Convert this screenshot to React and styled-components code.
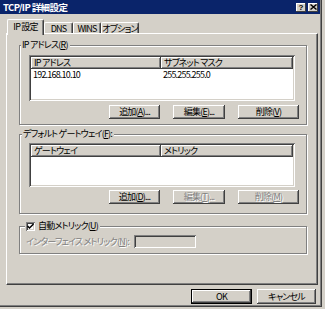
import styled, { createGlobalStyle } from 'styled-components';

const GlobalStyle = createGlobalStyle`
  html, body {
    margin: 0;
    padding: 0;
    background: #d4d0c8;
  }
  body {
    font-family: 'Noto Sans CJK JP', sans-serif;
    font-size: 9px;
    font-feature-settings: 'palt';
    letter-spacing: -0.8px;
    color: #000;
  }
`;

const Window = styled.div`
  width: 322px;
  height: 307px;
  box-sizing: border-box;
  background: #d4d0c8;
  border-right: 1px solid #404040;
  border-bottom: 1px solid #404040;
  box-shadow: inset -1px -1px 0 #808080;
  display: flex;
  flex-direction: column;
`;

const TitleBar = styled.div`
  height: 14px;
  background: #0a246a;
  display: flex;
  align-items: center;
  padding: 0 2px 0 3px;
  margin-right: 1px;
`;

const Title = styled.div`
  flex: 1;
  color: #fff;
  font-weight: bold;
  font-size: 9.5px;
  letter-spacing: -0.6px;
  line-height: 14px;
  white-space: nowrap;
`;

const CaptionButton = styled.div`
  width: 10px;
  height: 9px;
  margin-left: ${(p) => (p.$gap ? 2 : 0)}px;
  background: #d4d0c8;
  box-shadow: inset -1px -1px 0 #404040, inset 1px 1px 0 #fff;
  display: flex;
  align-items: center;
  justify-content: center;
  font-family: 'Liberation Sans', sans-serif;
  font-weight: bold;
  font-size: 8px;
  letter-spacing: 0;
  line-height: 9px;
`;

const TabStrip = styled.div`
  display: flex;
  align-items: flex-end;
  height: 14px;
  margin-top: 5px;
  padding-left: 7px;
  position: relative;
  z-index: 1;
`;

const Tab = styled.div`
  width: ${(p) => p.$w}px;
  height: ${(p) => (p.$active ? 16 : 11)}px;
  margin-bottom: ${(p) => (p.$active ? -2 : 0)}px;
  box-sizing: border-box;
  background: #d4d0c8;
  border-top: 1px solid #fff;
  border-left: 1px solid #fff;
  border-right: 1px solid #404040;
  border-top-left-radius: 2px;
  border-top-right-radius: 2px;
  box-shadow: inset -1px 0 0 #808080;
  display: flex;
  align-items: ${(p) => (p.$active ? 'flex-start' : 'center')};
  padding-top: ${(p) => (p.$active ? 1 : 0)}px;
  justify-content: center;
  line-height: 11px;
  white-space: nowrap;
  overflow: hidden;
`;

const Panel = styled.div`
  margin-left: 6px;
  width: 312px;
  height: 252px;
  box-sizing: border-box;
  border-top: 1px solid #fff;
  border-left: 1px solid #fff;
  border-right: 1px solid #404040;
  border-bottom: 1px solid #404040;
  box-shadow: inset -1px -1px 0 #808080;
  padding: 0 9px 0 12px;
`;

const Group = styled.div`
  position: relative;
  margin-top: ${(p) => p.$top}px;
  width: 288px;
  box-sizing: border-box;
  border: 1px solid #808080;
  box-shadow: inset 1px 1px 0 #fff, 1px 1px 0 #fff;
  padding: ${(p) => p.$pad};
`;

const Caption = styled.div`
  position: absolute;
  top: -7px;
  left: ${(p) => p.$left}px;
  padding: 0 2px 0 1px;
  background: #d4d0c8;
  line-height: 12px;
  display: flex;
  align-items: center;
  white-space: nowrap;
`;

const ListView = styled.div`
  width: 266px;
  height: ${(p) => p.$h}px;
  box-sizing: border-box;
  background: #fff;
  padding: 2px;
  box-shadow: inset 1px 1px 0 #808080, inset -1px -1px 0 #fff, inset 2px 2px 0 #404040,
    inset -2px -2px 0 #d4d0c8;
`;

const Columns = styled.div`
  display: grid;
  grid-template-columns: 130px 1fr;
`;

const HeaderCell = styled.div`
  height: 12px;
  background: #d4d0c8;
  box-shadow: inset -1px -1px 0 #404040, inset 1px 1px 0 #fff, inset -2px -2px 0 #808080;
  padding-left: 3px;
  line-height: 11px;
  white-space: nowrap;
  overflow: hidden;
`;

const Cell = styled.div`
  height: 12px;
  padding-left: 2px;
  line-height: 12px;
  white-space: nowrap;
`;

const ButtonRow = styled.div`
  display: flex;
  justify-content: flex-end;
  gap: 13px;
  margin-top: ${(p) => p.$top}px;
`;

const Button = styled.div`
  width: ${(p) => p.$w}px;
  height: ${(p) => p.$h || 14}px;
  box-sizing: border-box;
  background: #d4d0c8;
  border: ${(p) => (p.$default ? '1px solid #000' : 'none')};
  box-shadow: inset -1px -1px 0 #404040, inset 1px 1px 0 #fff, inset -2px -2px 0 #808080;
  display: flex;
  align-items: center;
  justify-content: center;
  line-height: 12px;
  white-space: nowrap;
  color: ${(p) => (p.$disabled ? '#808080' : '#000')};
  text-shadow: ${(p) => (p.$disabled ? '1px 1px 0 #fff' : 'none')};
`;

const U = styled.span`
  text-decoration: underline;
`;

const Check = styled.div`
  width: 9px;
  height: 9px;
  box-sizing: border-box;
  background: #fff;
  margin-right: 3px;
  box-shadow: inset 1px 1px 0 #808080, inset -1px -1px 0 #fff, inset 2px 2px 0 #404040,
    inset -2px -2px 0 #d4d0c8;
  display: flex;
  align-items: center;
  justify-content: center;
`;

const MetricRow = styled.div`
  display: flex;
  align-items: center;
`;

const DisabledLabel = styled.div`
  width: 108px;
  color: #808080;
  text-shadow: 1px 1px 0 #fff;
  white-space: nowrap;
`;

const TextBox = styled.div`
  width: 62px;
  height: 13px;
  box-sizing: border-box;
  background: #d4d0c8;
  box-shadow: inset 1px 1px 0 #808080, inset -1px -1px 0 #fff, inset 2px 2px 0 #404040,
    inset -2px -2px 0 #d4d0c8;
`;

const Footer = styled.div`
  display: flex;
  justify-content: flex-end;
  gap: 5px;
  margin-top: 4px;
  padding-right: 5px;
`;

function AddressList({ height, head, rows }) {
  return (
    <ListView $h={height}>
      <Columns>
        <HeaderCell>{head[0]}</HeaderCell>
        <HeaderCell>{head[1]}</HeaderCell>
        {rows.map((r) => [<Cell key={r[0]}>{r[0]}</Cell>, <Cell key={r[1]}>{r[1]}</Cell>])}
      </Columns>
    </ListView>
  );
}

function Label({ text, k, tail = '' }) {
  return (
    <span>
      {text}(<U>{k}</U>){tail}
    </span>
  );
}

export default function App() {
  return (
    <>
      <GlobalStyle />
      <Window>
        <TitleBar>
          <Title>TCP/IP 詳細設定</Title>
          <CaptionButton>?</CaptionButton>
          <CaptionButton $gap>
            <svg width="7" height="6" viewBox="0 0 7 6">
              <path d="M0.5 0.5 L6.5 5.5 M6.5 0.5 L0.5 5.5" stroke="#000" strokeWidth="1.4" />
            </svg>
          </CaptionButton>
        </TitleBar>

        <TabStrip>
          <Tab $w={37} $active>IP 設定</Tab>
          <Tab $w={29}>DNS</Tab>
          <Tab $w={28}>WINS</Tab>
          <Tab $w={38}>オプション</Tab>
        </TabStrip>

        <Panel>
          <Group $top={11} $pad="9px 7px 5px 9px">
            <Caption $left={1}>
              <Label text="IP アドレス" k="R" />
            </Caption>
            <AddressList
              height={46}
              head={['IP アドレス', 'サブネット マスク']}
              rows={[['192.168.10.10', '255.255.255.0']]}
            />
            <ButtonRow $top={4}>
              <Button $w={51}>
                <Label text="追加" k="A" tail="..." />
              </Button>
              <Button $w={52}>
                <Label text="編集" k="E" tail="..." />
              </Button>
              <Button $w={61}>
                <Label text="削除" k="V" />
              </Button>
            </ButtonRow>
          </Group>

          <Group $top={9} $pad="8px 7px 9px 9px">
            <Caption $left={2}>
              <Label text="デフォルト ゲートウェイ" k="F" tail=":" />
            </Caption>
            <AddressList height={44} head={['ゲートウェイ', 'メトリック']} rows={[]} />
            <ButtonRow $top={3}>
              <Button $w={51}>
                <Label text="追加" k="D" tail="..." />
              </Button>
              <Button $w={52} $disabled>
                <Label text="編集" k="T" tail="..." />
              </Button>
              <Button $w={61} $disabled>
                <Label text="削除" k="M" />
              </Button>
            </ButtonRow>
          </Group>

          <Group $top={12} $pad="8px 6px 5px 6px">
            <Caption $left={5}>
              <Check>
                <svg width="7" height="7" viewBox="0 0 7 7">
                  <path d="M0.5 3 L2.5 5 L6.5 1" stroke="#000" strokeWidth="1.5" fill="none" />
                </svg>
              </Check>
              <Label text="自動メトリック" k="U" />
            </Caption>
            <MetricRow>
              <DisabledLabel>
                <Label text="インターフェイス メトリック" k="N" tail=":" />
              </DisabledLabel>
              <TextBox />
            </MetricRow>
          </Group>
        </Panel>

        <Footer>
          <Button $w={61} $h={15} $default>
            OK
          </Button>
          <Button $w={59} $h={15}>
            キャンセル
          </Button>
        </Footer>
      </Window>
    </>
  );
}
